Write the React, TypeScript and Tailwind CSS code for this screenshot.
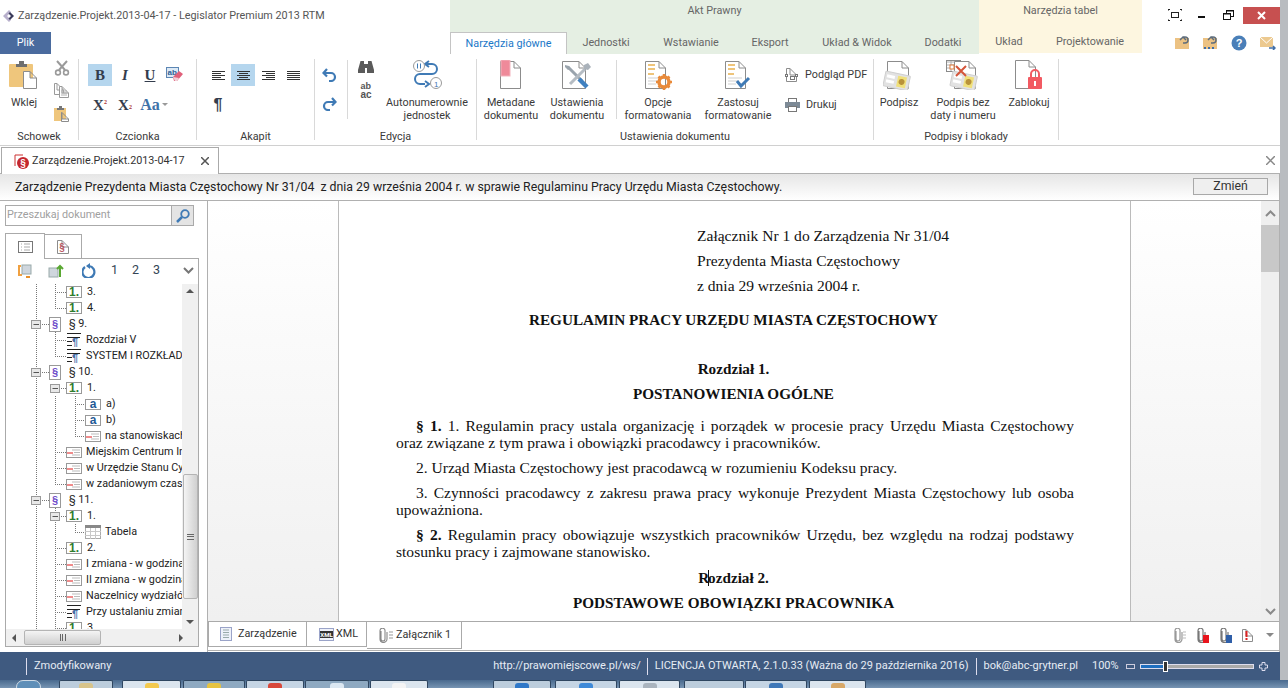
import React from "react";

const G = "#8c8c8c";
const DocShape = ({ x = 0, y = 0, w = 20, h = 28, stroke = G, fill = "#fff" }: any) => (
  <path d={`M${x + 0.5} ${y + 0.5}H${x + w - 7}L${x + w - 0.5} ${y + 7}V${y + h - 0.5}H${x + 0.5}ZM${x + w - 7} ${y + 0.5}V${y + 7}H${x + w - 0.5}`} fill={fill} stroke={stroke} strokeWidth="1" />
);

const Paste = ({ s = 30 }: { s?: number }) => (
  <svg width={s} height={s} viewBox="0 0 30 30">
    <rect x="0" y="4" width="24" height="23" rx="1" fill="#efc67c" />
    <path d="M7 4h3v-3h5v3h3v3H7z" fill="#6f6f6f" />
    <DocShape x={14} y={11} w={14} h={18} />
  </svg>
);
const Scissors = () => (
  <svg width="16" height="16" viewBox="0 0 16 16" fill="none" stroke="#9a9a9a">
    <path d="M3 1l8 9M13 1L5 10" strokeWidth="2" />
    <circle cx="4" cy="12.5" r="2.4" strokeWidth="1.6" />
    <circle cx="12" cy="12.5" r="2.4" strokeWidth="1.6" />
  </svg>
);
const CopyI = () => (
  <svg width="16" height="16" viewBox="0 0 16 16">
    <DocShape x={0} y={0} w={10} h={12} stroke="#9a9a9a" />
    <DocShape x={5} y={3} w={10} h={12} stroke="#9a9a9a" />
    <path d="M7 8h6M7 10h6M7 12h6" stroke="#b0b0b0" />
  </svg>
);
const PasteS = () => (
  <svg width="16" height="16" viewBox="0 0 16 16">
    <rect x="0" y="2" width="12" height="13" fill="#efc67c" />
    <path d="M3 2h2V0h3v2h2v2H3z" fill="#777" />
    <DocShape x={7} y={6} w={8} h={10} />
  </svg>
);
const Eraser = () => (
  <svg width="18" height="16" viewBox="0 0 18 16">
    <rect x="0.5" y="0.5" width="12" height="10" fill="#dce9f5" stroke="#5c86b4" />
    <text x="1.5" y="8" fontSize="8" fill="#2f5f96" fontFamily="Liberation Sans">ab</text>
    <path d="M7 10l6-6 4 3-6 7H8z" fill="#e0607a" />
    <path d="M7 10l2 4h2l2-3z" fill="#f0d0d8" />
  </svg>
);
const Align = ({ k }: { k: "l" | "c" | "r" | "j" }) => (
  <svg width="13" height="9" viewBox="0 0 13 9" stroke="#333">
    {[0, 1, 2, 3, 4].map((i) => {
      const w = k === "j" || i % 2 === 0 ? 13 : 9;
      const x = k === "l" || k === "j" ? 0 : k === "c" ? (13 - w) / 2 : 13 - w;
      return <line key={i} x1={x} x2={x + w} y1={i * 2 + 0.5} y2={i * 2 + 0.5} />;
    })}
  </svg>
);
const Undo = ({ flip }: { flip?: boolean }) => (
  <svg width="15" height="14" viewBox="0 0 15 14" fill="none" stroke="#3f7ab5" strokeWidth="2.2" className={flip ? "-scale-x-100" : ""}>
    <path d="M5 1L1.5 5 5 8.500" />
    <path d="M2 5h7a4 4 0 0 1 0 8H7" />
  </svg>
);
const Binoc = () => (
  <svg width="16" height="14" viewBox="0 0 16 14" fill="#5a5a5a">
    <path d="M2.500 1h3.500v3h1v5H7v4H0v-3z" />
    <path d="M13.500 1H10v3H9v5h0v4h7v-3z" />
    <rect x="6.500" y="4" width="3" height="4" />
  </svg>
);
const AutoNum = () => (
  <svg width="30" height="30" viewBox="0 0 30 30" fill="none">
    <path d="M13 8h7a5 5 0 0 1 0 10H8a5 5 0 0 0 0 10h5" stroke="#3f7ab5" strokeWidth="2" transform="translate(0 -4)" />
    <path d="M17 1l-4 3 4 3M13 21l4 3-4 3" stroke="#3f7ab5" strokeWidth="2" />
    <circle cx="7" cy="6" r="5.500" fill="#fff" stroke="#9a9a9a" />
    <circle cx="24" cy="23" r="5.500" fill="#fff" stroke="#9a9a9a" />
    <path d="M5.500 3.500v5M8.500 3.500v5" stroke="#3f7ab5" />
    <text x="22" y="26.500" fontSize="8" fill="#3f7ab5" fontFamily="Liberation Sans">1</text>
  </svg>
);
const Meta = () => (
  <svg width="22" height="30" viewBox="0 0 22 30">
    <DocShape x={0} y={1} w={21} h={28} />
    <rect x="1" y="0" width="9" height="16" fill="#ef8a9a" stroke="#f3b3bd" />
  </svg>
);
const Tools = () => (
  <svg width="30" height="30" viewBox="0 0 30 30">
    <DocShape x={0} y={1} w={24} h={28} />
    <path d="M6 7l14 14" stroke="#9aa4ad" strokeWidth="3" />
    <path d="M8 24L23 9" stroke="#b5bcc3" strokeWidth="3" />
    <path d="M22 5l4-2 3 4-3 3-4-1z" fill="#aab2ba" />
    <path d="M17 19l8 8" stroke="#3f80c0" strokeWidth="4.500" />
    <path d="M3 5l4 1 1 3-2 1-3-3z" fill="#9aa4ad" />
  </svg>
);
const Lines = ({ check, gear }: { check?: boolean; gear?: boolean }) => (
  <svg width="30" height="30" viewBox="0 0 30 30">
    <DocShape x={2} y={1} w={21} h={28} />
    <path d="M5 5h7M5 9h7M5 14h6" stroke="#eec47a" strokeWidth="2" fill="none" />
    <path d="M5 18h14M5 21h10M5 24h8" stroke="#cfcfcf" fill="none" />
    {gear && (
      <g>
        <circle cx="21" cy="22" r="5" fill="none" stroke="#e98a3a" strokeWidth="3.500" />
        <path d="M21 14v3M21 27v3M13 22h3M26 22h3M15.500 16.500l2 2M24.500 25.500l2 2M26.500 16.500l-2 2M17.500 25.500l-2 2" stroke="#e98a3a" strokeWidth="2.500" />
      </g>
    )}
    {check && <path d="M14 21l4 5 8-8" fill="none" stroke="#3f7ab5" strokeWidth="3" />}
  </svg>
);
const PdfI = () => (
  <svg width="14" height="15" viewBox="0 0 14 15">
    <DocShape x={1} y={0} w={11} h={14} />
    <rect x="0.500" y="6.500" width="2" height="2" fill="#fff" stroke="#777" />
    <rect x="5.500" y="8.500" width="4" height="3" fill="#fff" stroke="#777" />
    <rect x="10.500" y="6.500" width="2" height="2" fill="#fff" stroke="#777" />
  </svg>
);
const Printer = () => (
  <svg width="15" height="14" viewBox="0 0 15 14">
    <rect x="3.500" y="0.500" width="8" height="4" fill="#fff" stroke="#777" />
    <rect x="0" y="4" width="15" height="6" fill="#7d8a96" />
    <rect x="3.500" y="8.500" width="8" height="5" fill="#fff" stroke="#777" />
  </svg>
);
const Card = ({ x, y }: { x: number; y: number }) => (
  <g transform={`translate(${x} ${y}) rotate(12)`}>
    <rect x="0" y="0" width="25" height="15" rx="1" fill="#e2e2e2" stroke="#cfcfcf" />
    <rect x="2" y="3" width="8" height="3" fill="#fff" />
    <rect x="2" y="8" width="8" height="3" fill="#fff" />
    <rect x="13" y="2" width="9" height="11" fill="#f0e07a" />
    <circle cx="17.500" cy="7.500" r="3" fill="#b8923a" />
  </g>
);
const Sign = () => (
  <svg width="32" height="30" viewBox="0 0 32 30">
    <DocShape x={4} y={1} w={22} h={28} />
    <Card x={3} y={11} />
  </svg>
);
const SignX = () => (
  <svg width="34" height="30" viewBox="0 0 34 30">
    <rect x="0.500" y="0.500" width="14" height="11" fill="#fff" stroke="#8a8a8a" />
    <path d="M1 2h13M1 5h13M1 8h13M5 1v10M10 1v10" stroke="#b0b0b0" />
    <DocShape x={8} y={1} w={22} h={28} />
    <Card x={7} y={11} />
    <path d="M10 6l10 10M20 6L10 16" stroke="#d4553a" strokeWidth="2" />
    <rect x="4" y="5" width="4" height="4" fill="#fff" stroke="#e07a3a" />
  </svg>
);
const Lock = () => (
  <svg width="28" height="30" viewBox="0 0 28 30">
    <DocShape x={0} y={0} w={21} h={29} />
    <path d="M16 17v-3a4 4 0 0 1 8 0v3" fill="none" stroke="#f25a62" strokeWidth="2" />
    <rect x="13" y="17" width="14" height="12" rx="1" fill="#f25a62" />
    <rect x="19" y="21" width="2" height="5" fill="#fff" />
  </svg>
);
const Folder = ({ dots }: { dots?: boolean }) => (
  <svg width="15" height="15" viewBox="0 0 15 15">
    <rect x="0" y="3" width="14" height="11" fill="#ecc283" />
    <path d="M5 5L8 2l3 3M8 2h2a3 3 0 0 1 0 6H8" fill="none" stroke="#5f6d7c" strokeWidth="1.500" />
    {dots && <path d="M1 13h2M5 13h2M9 13h2" stroke="#3f6ea8" strokeWidth="2" />}
  </svg>
);
const Help = () => (
  <svg width="16" height="16" viewBox="0 0 16 16">
    <circle cx="8" cy="8" r="7.500" fill="#4a7fb8" />
    <text x="8" y="12" fontSize="11" fontWeight="700" textAnchor="middle" fill="#fff" fontFamily="Liberation Sans">?</text>
  </svg>
);
const Mail = () => (
  <svg width="16" height="14" viewBox="0 0 16 14">
    <rect x="0" y="1" width="13" height="10" fill="#ecc98f" />
    <path d="M0 1l6.500 6L13 1" fill="none" stroke="#fff" />
    <path d="M9 12h6M13 10l2 2-2 2" stroke="#3f6ea8" strokeWidth="1.500" fill="none" />
  </svg>
);

const Big = ({ icon, children, className = "" }: any) => (
  <div className={`flex flex-col items-center shrink-0 ${className}`}>
    <div className="h-[30px] mt-px flex items-start justify-center">{icon}</div>
    <div className="mt-[6px] text-center leading-[13px] whitespace-nowrap">{children}</div>
  </div>
);
const Group = ({ label, className = "", children }: any) => (
  <div className={`h-[81px] border-r border-[#d9d9d9] shrink-0 ${className}`}>
    <div className="h-[71px] flex">{children}</div>
    <div className="h-[14px] leading-[14px] text-center whitespace-nowrap">{label}</div>
  </div>
);
const Tb = ({ on, children, className = "" }: any) => (
  <div className={`w-6 h-[22px] flex items-center justify-center ${on ? "bg-[#b5d6ee]" : ""} ${className}`}>{children}</div>
);

type Row = { t: string; i: string; x: number; v: [number, boolean?][]; exp?: number; h?: number };
const full = (...a: number[]) => a.map((n) => [n] as [number]);
const rows: Row[] = [
  { t: "3.", i: "num", x: 66, v: full(36, 55), h: 55 },
  { t: "4.", i: "num", x: 66, v: [[36], [55, true]], h: 55 },
  { t: "§ 9.", i: "par", x: 49, v: full(36), exp: 36, h: 36 },
  { t: "Rozdział V", i: "rozd", x: 67, v: full(36, 55), h: 55 },
  { t: "SYSTEM I ROZKŁAD CZASU PRACY", i: "rozd", x: 67, v: [[36], [55, true]], h: 55 },
  { t: "§ 10.", i: "par", x: 49, v: full(36), exp: 36, h: 36 },
  { t: "1.", i: "num", x: 66, v: full(36), exp: 55, h: 55 },
  { t: "a)", i: "a", x: 85, v: full(36, 55, 75), h: 75 },
  { t: "b)", i: "a", x: 85, v: full(36, 55, 75), h: 75 },
  { t: "na stanowiskach pracy", i: "line", x: 85, v: [[36], [55], [75, true]], h: 75 },
  { t: "Miejskim Centrum Informacji", i: "line", x: 66, v: full(36, 55), h: 55 },
  { t: "w Urzędzie Stanu Cywilnego", i: "line", x: 66, v: full(36, 55), h: 55 },
  { t: "w zadaniowym czasie pracy", i: "line", x: 66, v: [[36], [55, true]], h: 55 },
  { t: "§ 11.", i: "par", x: 49, v: full(36), exp: 36, h: 36 },
  { t: "1.", i: "num", x: 66, v: full(36, 55), exp: 55, h: 55 },
  { t: "Tabela", i: "table", x: 85, v: [[36], [55], [75, true]], h: 75 },
  { t: "2.", i: "num", x: 66, v: full(36, 55), h: 55 },
  { t: "I zmiana - w godzinach", i: "line", x: 66, v: full(36, 55), h: 55 },
  { t: "II zmiana - w godzinach", i: "line", x: 66, v: full(36, 55), h: 55 },
  { t: "Naczelnicy wydziałów", i: "line", x: 66, v: full(36, 55), h: 55 },
  { t: "Przy ustalaniu zmian", i: "rozd", x: 67, v: full(36, 55), h: 55 },
  { t: "3.", i: "num", x: 66, v: full(36, 55), h: 55 },
];

const TreeIcon = ({ i }: { i: string }) => {
  if (i === "num")
    return (
      <div className="w-[16px] h-[12px] border border-[#999] bg-white flex items-center justify-center text-[12px] leading-none font-bold text-[#2f7d2f] shrink-0 font-['Liberation_Sans',sans-serif]">1.</div>
    );
  if (i === "par")
    return (
      <div className="w-[12px] h-[15px] border border-[#999] bg-white flex items-center justify-center text-[11px] leading-none font-bold text-[#6a48c8] shrink-0 font-['Liberation_Sans',sans-serif]">§</div>
    );
  if (i === "a")
    return (
      <div className="w-[16px] h-[11px] border border-[#999] bg-white flex items-center justify-center text-[12px] leading-none font-bold text-[#1f5a96] shrink-0 font-['Liberation_Sans',sans-serif]">a</div>
    );
  if (i === "line")
    return (
      <svg width="16" height="11" viewBox="0 0 16 11" className="shrink-0">
        <rect x="0.500" y="0.500" width="15" height="10" fill="#fff" stroke="#999" />
        <path d="M6 3h8M8 5.500h6M6 8h8" stroke="#bbb" />
        <path d="M1 6h6" stroke="#e01818" />
      </svg>
    );
  if (i === "rozd")
    return (
      <svg width="14" height="14" viewBox="0 0 14 14" className="shrink-0">
        <path d="M0 .5h14M0 4.500h13M0 8.500h5M0 12.500h5" stroke="#222" />
        <text x="5" y="13" fontSize="11" fontWeight="700" fill="#4a6fa8" fontFamily="Liberation Sans">¶</text>
      </svg>
    );
  return (
    <svg width="16" height="14" viewBox="0 0 16 14" className="shrink-0">
      <rect x="0.500" y="0.500" width="15" height="13" fill="#fff" stroke="#aaa" />
      <rect x="0" y="0" width="16" height="3" fill="#888" />
      <path d="M0 6.500h16M0 10.500h16M5.500 3v11M10.500 3v11" stroke="#c8c8c8" />
    </svg>
  );
};

const TreeRow = ({ r }: { r: Row }) => (
  <div className="flex items-center h-4 whitespace-nowrap text-[#222]">
    <svg width={r.x} height="16" className="shrink-0">
      {r.v.map(([x, half], k) => (
        <line key={k} x1={x + 0.5} x2={x + 0.5} y1="0" y2={half ? 8 : 16} stroke="#777" strokeDasharray="1 1" />
      ))}
      {r.h !== undefined && <line x1={r.h} x2={r.x} y1="8.500" y2="8.500" stroke="#777" strokeDasharray="1 1" />}
      {r.exp !== undefined && (
        <g>
          <rect x={r.exp - 4.5} y="4.500" width="9" height="8" fill="#e8e8e8" stroke="#999" />
          <line x1={r.exp - 2.5} x2={r.exp + 3} y1="8.500" y2="8.500" stroke="#555" />
        </g>
      )}
    </svg>
    <TreeIcon i={r.i} />
    <span className={r.i === "par" ? "ml-2" : r.i === "line" || r.i === "table" ? "ml-[4px]" : "ml-[5px]"}>{r.t}</span>
  </div>
);

const Tri = ({ d, c = "#555" }: { d: "u" | "d" | "l" | "r"; c?: string }) => {
  const p = { u: "M0 5L4 1l4 4z", d: "M0 1l4 4 4-4z", l: "M5 0L1 4l4 4z", r: "M1 0l4 4-4 4z" }[d];
  return (
    <svg width="8" height="8" viewBox="0 0 8 8"><path d={p} fill={c} /></svg>
  );
};
const Chev = ({ up, c = "#777" }: { up?: boolean; c?: string }) => (
  <svg width="11" height="7" viewBox="0 0 11 7" fill="none" stroke={c} strokeWidth="2">
    <path d={up ? "M1 6l4.500-4.500L10 6" : "M1 1l4.500 4.500L10 1"} />
  </svg>
);
const Clip = ({ c = "#999" }: { c?: string }) => (
  <svg width="10" height="15" viewBox="0 0 10 15" fill="none" stroke={c} strokeWidth="1.200">
    <path d="M3 3v8a2 2 0 0 0 4 0V3a2.500 2.500 0 0 0-5-.5V11a3.500 3.500 0 0 0 7 0V4" />
  </svg>
);

const L = ({ className = "", children }: any) => <div className={`h-[17px] leading-[17px] whitespace-nowrap ${className}`}>{children}</div>;
const C = ({ className = "", children }: any) => <div className={`h-[17px] leading-[17px] whitespace-nowrap text-center font-bold text-[15.2px] pr-[3px] ${className}`}>{children}</div>;
const J = ({ className = "", children }: any) => <div className={`h-[17px] leading-[17px] text-justify [text-align-last:justify] overflow-hidden ${className}`}>{children}</div>;

const Task = ({ className = "", ic }: { className?: string; ic?: string }) => (
  <div className={`h-full rounded-t-[2px] shrink-0 border-t border-x border-[#2f4660] flex justify-center overflow-hidden ${className}`}>
    {ic && <div className={`w-[14px] h-[6px] mt-[2px] rounded-t-[3px] ${ic}`} />}
  </div>
);

export default function App() {
  return (
    <div className="w-[1288px] h-[688px] overflow-hidden bg-[#b4b8bc] font-['Roboto',sans-serif] text-[10.8px] text-[#3a3a3a] flex flex-col">
      <div className="flex h-[680px] shrink-0">
        <div className="w-[1280px] bg-white flex flex-col shrink-0">
          {/* top */}
          <div className="flex h-[54px] shrink-0">
            <div className="w-[450px] flex flex-col shrink-0">
              <div className="h-[32px] flex items-center pl-[2px]">
                <svg width="14" height="14" viewBox="0 0 14 14" className="shrink-0">
                  <path d="M7 1L1 7l6 6 2-2-4-4 4-4z" fill="#b8b0cc" />
                  <path d="M8 3l4 4-4 4-1.500-1.500L9 7 6.500 4.500z" fill="#3a3a5a" />
                </svg>
                <span className="ml-[2px] text-[#555] whitespace-nowrap">Zarządzenie.Projekt.2013-04-17 - Legislator Premium 2013 RTM</span>
              </div>
              <div className="w-[51px] h-[22px] bg-[#4a6b9e] text-white flex items-center justify-center">Plik</div>
            </div>
            <div className="w-[529px] bg-[#e5efe3] flex flex-col shrink-0 text-[#666]">
              <div className="h-[32px] pt-[3px] text-center leading-4">Akt Prawny</div>
              <div className="h-[22px] flex items-center whitespace-nowrap text-center">
                <div className="w-[117px] h-[22px] bg-white border-t border-x border-[#c4c4c4] text-[#1a78c8] leading-[22px]">Narzędzia główne</div>
                <div className="w-[78px]">Jednostki</div>
                <div className="w-[92px]">Wstawianie</div>
                <div className="w-[66px]">Eksport</div>
                <div className="w-[108px]">Układ &amp; Widok</div>
                <div className="w-[64px]">Dodatki</div>
              </div>
            </div>
            <div className="w-[163px] bg-[#fdf6e0] flex flex-col shrink-0 text-[#666] h-[53px]">
              <div className="h-[32px] pt-[3px] text-center leading-4">Narzędzia tabel</div>
              <div className="h-[21px] flex items-center whitespace-nowrap text-center">
                <div className="w-[60px]">Układ</div>
                <div className="w-[102px]">Projektowanie</div>
              </div>
            </div>
            <div className="w-[138px] shrink-0 flex flex-col">
              <div className="h-[25px] flex items-start">
                <div className="flex items-center mt-[8px] ml-[26px] h-[14px]">
                  <svg width="14" height="12" viewBox="0 0 14 12" fill="none" stroke="#222"><path d="M0 2V.5h2M12 .5h2V2M14 10v1.500h-2M2 11.500H0V10" /><rect x="3.500" y="3.500" width="7" height="5" /></svg>
                  <div className="w-[7px] h-[2px] bg-[#111] mt-1 ml-[16px]" />
                  <svg width="11" height="10" viewBox="0 0 11 10" fill="none" stroke="#111" className="ml-[18px]"><rect x="3.500" y="0.500" width="7" height="6" strokeWidth="1" /><rect x="0.500" y="3.500" width="7" height="6" fill="#fff" /><path d="M1 4h6M4 1h6" strokeWidth="1" /></svg>
                </div>
                <div className="ml-auto w-[37px] h-[17px] mt-[7px] bg-[#c75050] flex items-center justify-center">
                  <svg width="9" height="9" viewBox="0 0 9 9" stroke="#fff" strokeWidth="2"><path d="M1 1l7 7M8 1L1 8" /></svg>
                </div>
              </div>
              <div className="flex items-center pl-[33px] gap-[13px] h-[26px] pt-[9px]">
                <Folder />
                <Folder dots />
                <Help />
                <Mail />
              </div>
            </div>
          </div>
          {/* ribbon */}
          <div className="h-[92px] border-b border-[#d0d0d0] pt-[5px] flex shrink-0">
            <Group label="Schowek" className="w-[79px]">
              <Big icon={<Paste />} className="w-[40px] ml-[4px]">Wklej</Big>
              <div className="flex flex-col ml-[10px] gap-[7px] pt-px">
                <Scissors />
                <CopyI />
                <PasteS />
              </div>
            </Group>
            <Group label="Czcionka" className="w-[118px]">
              <div className="pl-[9px] pt-[5px] font-['Liberation_Serif',serif] text-[15px] font-bold text-[#333d4d]">
                <div className="flex gap-px">
                  <Tb on>B</Tb>
                  <Tb className="italic">I</Tb>
                  <Tb className="underline">U</Tb>
                  <Tb><Eraser /></Tb>
                </div>
                <div className="flex gap-px mt-2">
                  <Tb>X<sup className="text-[6px] text-[#a33]">2</sup></Tb>
                  <Tb>X<sub className="text-[6px] text-[#a33]">2</sub></Tb>
                  <Tb className="text-[#3f72a8] text-[16px]">Aa</Tb>
                  <div className="h-[22px] flex items-center -ml-px"><svg width="6" height="4" viewBox="0 0 6 4"><path d="M0 0h6L3 3z" fill="#999" /></svg></div>
                </div>
              </div>
            </Group>
            <Group label="Akapit" className="w-[118px]">
              <div className="pl-[9px] pt-[5px]">
                <div className="flex gap-px">
                  <Tb><Align k="l" /></Tb>
                  <Tb on><Align k="c" /></Tb>
                  <Tb><Align k="r" /></Tb>
                  <Tb><Align k="j" /></Tb>
                </div>
                <div className="flex mt-2">
                  <Tb className="text-[16px] font-bold text-[#333d4d] font-['Liberation_Sans',sans-serif]">¶</Tb>
                </div>
              </div>
            </Group>
            <Group label="Edycja" className="w-[162px]">
              <div className="w-[33px] h-[59px] mt-px border-r border-[#d9d9d9] flex flex-col items-center pt-[8px] gap-[15px] pr-[3px]">
                <Undo />
                <Undo flip />
              </div>
              <div className="ml-[10px] w-[16px] flex flex-col items-center pt-px gap-[9px]">
                <Binoc />
                <div className="font-['Liberation_Sans',sans-serif] font-bold text-[9px] text-[#555]">
                  <div className="h-[7px] leading-[7px]">ab</div>
                  <div className="h-[8px] leading-[8px] mt-[1px] text-[10px]">ac</div>
                </div>
              </div>
              <Big icon={<AutoNum />} className="w-[82px] ml-[12px]">Autonumerownie<br />jednostek</Big>
            </Group>
            <Group label="Ustawienia dokumentu" className="w-[397px]">
              <Big icon={<Meta />} className="w-[60px] ml-[4px]">Metadane<br />dokumentu</Big>
              <Big icon={<Tools />} className="w-[60px] ml-[6px]">Ustawienia<br />dokumentu</Big>
              <div className="w-px h-[59px] mt-px bg-[#d9d9d9] ml-[9px]" />
              <Big icon={<Lines gear />} className="w-[76px] ml-[3px]">Opcje<br />formatowania</Big>
              <Big icon={<Lines check />} className="w-[76px] ml-[4px]">Zastosuj<br />formatowanie</Big>
              <div className="ml-[9px] pt-[9px] flex flex-col gap-4">
                <div className="h-[14px] flex items-center gap-[6px] whitespace-nowrap"><PdfI />Podgląd PDF</div>
                <div className="h-[14px] flex items-center gap-[6px] whitespace-nowrap"><Printer />Drukuj</div>
              </div>
            </Group>
            <Group label="Podpisy i blokady" className="w-[185px]">
              <Big icon={<Sign />} className="w-[40px] ml-[5px]">Podpisz</Big>
              <Big icon={<SignX />} className="w-[70px] ml-[9px]">Podpis bez<br />daty i numeru</Big>
              <Big icon={<Lock />} className="w-[44px] ml-[9px]">Zablokuj</Big>
            </Group>
          </div>
          {/* document tab strip */}
          <div className="h-[28px] flex shrink-0 pt-px pl-px border-b border-[#b0b0b0]">
            <div className="w-[218px] h-[27px] bg-white border-t border-x border-[#aaa] flex items-center pl-[12px] text-[#333]">
              <svg width="15" height="15" viewBox="0 0 15 15" className="shrink-0">
                <path d="M1 1h8M1 1v11" stroke="#c33" fill="none" />
                <circle cx="9" cy="9" r="6" fill="#c4272f" />
                <text x="9" y="13" fontSize="10" fontWeight="700" textAnchor="middle" fill="#fff" fontFamily="Liberation Sans">§</text>
              </svg>
              <span className="ml-[3px] whitespace-nowrap">Zarządzenie.Projekt.2013-04-17</span>
              <svg width="8" height="8" viewBox="0 0 8 8" stroke="#555" strokeWidth="1.500" className="ml-auto mr-[9px]"><path d="M0 0l8 8M8 0L0 8" /></svg>
            </div>
            <div className="flex-1 flex items-center justify-end pr-[5px]">
              <svg width="9" height="9" viewBox="0 0 9 9" stroke="#888" strokeWidth="1.500"><path d="M0 0l9 9M9 0L0 9" /></svg>
            </div>
          </div>
          {/* info bar */}
          <div className="h-[27px] flex items-center shrink-0 pl-[15px] pr-[11px] bg-gradient-to-b from-[#e6e6e6] to-white border-b border-r border-[#b0b0b0] text-[#222] text-[12.3px]">
            <span className="whitespace-pre">Zarządzenie Prezydenta Miasta Częstochowy Nr 31/04  z dnia 29 września 2004 r. w sprawie Regulaminu Pracy Urzędu Miasta Częstochowy.</span>
            <div className="ml-auto w-[75px] h-[17px] border border-[#a8a8a8] bg-[#efefef] flex items-center justify-center text-[#333] mb-[2px]">Zmień</div>
          </div>
          {/* content */}
          <div className="h-[451px] flex shrink-0">
            {/* left */}
            <div className="w-[207px] shrink-0 pl-[5px] flex flex-col">
              <div className="w-[189px] h-[21px] mt-[4px] border border-[#aaa] flex bg-white shrink-0">
                <div className="flex-1 pl-px text-[#a0a0a0] leading-[18px]">Przeszukaj dokument</div>
                <div className="w-[22px] bg-[#e4e4e4] border-l border-[#aaa] flex items-center justify-center">
                  <svg width="14" height="14" viewBox="0 0 14 14" fill="none" stroke="#3f7ab5"><circle cx="9" cy="5" r="3.800" strokeWidth="1.800" /><path d="M6 8l-5 5" strokeWidth="2.500" /></svg>
                </div>
              </div>
              <div className="flex mt-[7px] h-[26px] shrink-0 items-end relative z-10 -mb-px">
                <div className="w-[40px] h-[26px] bg-white border-t border-x border-[#aaa] flex items-center justify-center">
                  <svg width="15" height="12" viewBox="0 0 15 12"><rect x="0.500" y="0.500" width="14" height="11" fill="#fff" stroke="#777" /><path d="M3 3h1M6 3h6M3 6h1M6 6h6M3 9h1M6 9h6" stroke="#aaa" /></svg>
                </div>
                <div className="w-[37px] h-[25px] bg-white border-t border-r border-[#aaa] border-b flex items-center justify-center">
                  <svg width="12" height="14" viewBox="0 0 12 14"><DocShape x={0} y={0} w={12} h={14} /><text x="5" y="11" fontSize="10" fontWeight="700" textAnchor="middle" fill="#b8545c" fontFamily="Liberation Sans">§</text></svg>
                </div>
              </div>
              <div className="w-[194px] h-[389px] border border-[#aaa] flex flex-col shrink-0 overflow-hidden">
                <div className="h-[25px] pb-[2px] flex items-center shrink-0 text-[12.500px] text-[#345]">
                  <svg width="16" height="14" viewBox="0 0 16 14" className="ml-[11px]"><rect x="5" y="1" width="9" height="9" fill="#cfd6dd" stroke="#9aa" /><path d="M4 2H2v9h3" fill="none" stroke="#f0a040" strokeWidth="2" /><path d="M9 13h4" stroke="#e8902c" strokeWidth="2" /></svg>
                  <svg width="16" height="14" viewBox="0 0 16 14" className="ml-[15px]"><rect x="1" y="4" width="9" height="9" fill="#cfd6dd" stroke="#9aa" /><path d="M12 13V3M9 5l3-3 3 3" fill="none" stroke="#5aa832" strokeWidth="2" /></svg>
                  <svg width="14" height="15" viewBox="0 0 14 15" fill="none" className="ml-[18px]"><path d="M3 4a6 6 0 1 0 4-1" stroke="#3f7ab5" strokeWidth="2.200" /><path d="M8 0L4 3l4 3z" fill="#3f7ab5" /></svg>
                  <span className="ml-[15px] w-[21px]">1</span>
                  <span className="w-[21px]">2</span>
                  <span className="w-[30px]">3</span>
                  <Chev />
                </div>
                <div className="flex flex-1 min-h-0">
                  <div className="w-[176px] overflow-hidden shrink-0">
                    <div className="-ml-[6px]">
                      {rows.map((r, i) => <TreeRow r={r} key={i} />)}
                    </div>
                  </div>
                  <div className="w-[16px] ml-auto bg-[#f0f0f0] flex flex-col items-center shrink-0">
                    <div className="h-[15px] flex items-center"><Tri d="u" /></div>
                    <div className="h-[175px] shrink-0" />
                    <div className="w-[15px] h-[125px] shrink-0 rounded-[2px] border border-[#b4b4b4] bg-gradient-to-r from-[#f4f4f4] to-[#d0d0d0] flex items-center justify-center">
                      <div className="w-[7px] h-[6px] border-y border-[#666] flex items-center"><div className="w-full h-px bg-[#666]" /></div>
                    </div>
                    <div className="flex-1 flex items-end pb-[2px]"><Tri d="d" /></div>
                  </div>
                </div>
                <div className="h-[17px] bg-[#f0f0f0] flex items-center shrink-0">
                  <div className="w-[18px] flex justify-center"><Tri d="l" /></div>
                  <div className="w-[77px] h-[15px] rounded-[2px] border border-[#b4b4b4] bg-gradient-to-b from-[#f4f4f4] to-[#d0d0d0] flex items-center justify-center">
                    <div className="w-[6px] h-[7px] border-x border-[#666] flex justify-center"><div className="w-px h-full bg-[#666]" /></div>
                  </div>
                  <div className="flex-1 flex justify-end pr-[12px]"><Tri d="r" /></div>
                </div>
              </div>
            </div>
            {/* right */}
            <div className="w-[1073px] shrink-0 flex flex-col border-l border-r border-[#b0b0b0]">
              <div className="h-[421px] flex shrink-0 border-b border-[#aaa] bg-gradient-to-b from-white to-[#f0f0f0]">
                <div className="w-[130px] shrink-0" />
                <div className="w-[793px] shrink-0 h-full bg-white border-x border-[#bbb] pt-[26px] pl-[57px] pr-[56px] font-['Liberation_Serif',serif] text-[15.550px] text-[#111] overflow-hidden">
                  <L className="pl-[301px]">Załącznik Nr 1 do Zarządzenia Nr 31/04</L>
                  <L className="pl-[301px] mt-2">Prezydenta Miasta Częstochowy</L>
                  <L className="pl-[301px] mt-2">z dnia 29 września 2004 r.</L>
                  <C className="mt-[17px]">REGULAMIN PRACY URZĘDU MIASTA CZĘSTOCHOWY</C>
                  <C className="mt-[32px]">Rozdział 1.</C>
                  <C className="mt-2">POSTANOWIENIA OGÓLNE</C>
                  <J className="mt-[15px] pl-5"><b>§ 1.</b> 1. Regulamin pracy ustala organizację i porządek w procesie pracy Urzędu Miasta Częstochowy</J>
                  <L>oraz związane z tym prawa i obowiązki pracodawcy i pracowników.</L>
                  <L className="mt-2 pl-5">2. Urząd Miasta Częstochowy jest pracodawcą w rozumieniu Kodeksu pracy.</L>
                  <J className="mt-2 pl-5">3. Czynności pracodawcy z zakresu prawa pracy wykonuje Prezydent Miasta Częstochowy lub osoba</J>
                  <L>upoważniona.</L>
                  <J className="mt-2 pl-5"><b>§ 2.</b> Regulamin pracy obowiązuje wszystkich pracowników Urzędu, bez względu na rodzaj podstawy</J>
                  <L>stosunku pracy i zajmowane stanowisko.</L>
                  <C className="mt-[9px]">R<span className="inline-block w-px h-[16px] bg-[#111] align-[-3px] -mx-px" />ozdział 2.</C>
                  <C className="mt-2">PODSTAWOWE OBOWIĄZKI PRACOWNIKA</C>
                </div>
                <div className="w-[130px] shrink-0" />
                <div className="w-[18px] bg-[#efefef] flex flex-col items-center shrink-0">
                  <div className="h-[24px] flex items-center"><Chev up c="#8a8a8a" /></div>
                  <div className="w-full h-[47px] bg-[#c8c8c8]" />
                  <div className="flex-1 flex items-end pb-[6px]"><Chev c="#8a8a8a" /></div>
                </div>
              </div>
              <div className="flex-1 flex border-b border-[#b0b0b0] mb-px items-start">
                <div className="w-[99px] h-[25px] border border-t-0 border-[#aaa] flex items-center pl-[11px] gap-[6px] text-[#333] shrink-0">
                  <svg width="12" height="14" viewBox="0 0 12 14"><rect x="0.500" y="0.500" width="11" height="13" fill="#eef1fa" stroke="#9aa3c8" /><path d="M3 3h6M3 5.500h6M3 8h6M3 10.500h6" stroke="#9aa" /></svg>
                  Zarządzenie
                </div>
                <div className="w-[60px] h-[25px] border border-t-0 border-l-0 border-[#aaa] flex items-center pl-[12px] gap-[2px] text-[#333] shrink-0">
                  <div className="w-[15px] h-[13px] border border-[#9aa3c8] bg-[#eef1fa] flex items-center justify-center"><div className="w-[13px] h-[7px] bg-[#333] text-[6px] leading-[7px] text-center text-white font-bold">XML</div></div>
                  XML
                </div>
                <div className="w-[95px] h-[27px] border border-t-0 border-l-0 border-[#aaa] flex items-center pl-[11px] gap-[2px] text-[#333] shrink-0">
                  <svg width="16" height="15" viewBox="0 0 16 15" fill="none" stroke="#888" strokeWidth="1.100"><path d="M3 3v8a2 2 0 0 0 4 0V3a2.500 2.500 0 0 0-5-.5V11a3.500 3.500 0 0 0 7 0V4" /><path d="M11 4h4M11 7h4M11 10h4" stroke="#999" /></svg>
                  Załącznik 1
                </div>
                <div className="ml-auto flex items-center h-[26px] gap-[10px] pr-[5px]">
                  <div className="flex items-center"><Clip /><svg width="3" height="9" viewBox="0 0 3 9"><path d="M0 1h3M0 4h3M0 7h3" stroke="#bbb" /></svg></div>
                  <div className="flex items-end"><Clip c="#777" /><div className="w-[6px] h-[8px] bg-[#e8141c] -ml-[3px]" /></div>
                  <div className="flex items-end"><Clip c="#777" /><div className="w-[6px] h-[8px] bg-[#2f5fa8] -ml-[3px]" /></div>
                  <svg width="11" height="13" viewBox="0 0 11 13"><DocShape x={0} y={0} w={11} h={13} /><rect x="3.500" y="2" width="2" height="6" fill="#d22" /><rect x="3.500" y="9" width="2" height="2" fill="#d22" /></svg>
                  <svg width="8" height="5" viewBox="0 0 8 5" className="ml-[3px]"><path d="M0 0h8L4 4z" fill="#888" /></svg>
                </div>
              </div>
            </div>
          </div>
          {/* status */}
          <div className="h-[28px] bg-[#3f5a80] flex items-center shrink-0 text-[#e6ecf4] whitespace-nowrap text-[11px]">
            <div className="w-px h-[17px] bg-[#dde] ml-[26px]" />
            <span className="ml-[7px]">Zmodyfikowany</span>
            <span className="ml-auto">http://prawomiejscowe.pl/ws/</span>
            <div className="w-px h-[17px] bg-[#dde] ml-[6px]" />
            <span className="ml-[7px]">LICENCJA OTWARTA, 2.1.0.33 (Ważna do 29 października 2016)</span>
            <div className="w-px h-[17px] bg-[#dde] ml-[7px]" />
            <span className="ml-[7px]">bok@abc-grytner.pl</span>
            <span className="ml-[14px] w-[34px]">100%</span>
            <div className="w-[9px] h-[5px] border border-[#ccd] bg-[#3f5a80]" />
            <div className="w-[114px] h-[5px] bg-[#aaa] ml-[5px] flex items-center border border-[#dde]">
              <div className="w-[22px] h-[3px] bg-[#1f6fc0]" />
              <div className="w-[5px] h-[11px] bg-[#333] border border-white shrink-0" />
            </div>
            <svg width="9" height="9" viewBox="0 0 9 9" className="ml-[5px] mr-[12px]" fill="#3f5a80" stroke="#dde"><path d="M3 .5h3v2.500h2.500v3H6v2.500H3V6H.5V3H3z" /></svg>
          </div>
        </div>
        <div className="flex-1 bg-[#b9bcc0]" />
      </div>
      {/* taskbar */}
      <div className="h-[8px] shrink-0 bg-gradient-to-b from-[#4a6a8e] to-[#7795b3] flex">
        <div className="w-[16px] shrink-0" />
        <div className="w-[25px] h-[14px] rounded-full border border-[#cfdbe6] bg-[#5f8fb8] shrink-0" />
        <div className="w-[18px] shrink-0" />
        <Task className="w-[54px] bg-[#bccddc]" ic="bg-[#d8c48a]" />
        <Task className="w-[59px] ml-[9px] bg-[#dbe5ee]" ic="bg-[#f3c94e]" />
        <Task className="w-[62px] ml-[2px] bg-[#8ea9c1]" ic="bg-[#e6c340]" />
        <Task className="w-[58px] ml-px bg-[#c5d5e4]" ic="bg-[#d8483a]" />
        <Task className="w-[64px] ml-px bg-[#8ea9c1]" ic="bg-[#dce8f2]" />
        <Task className="w-[58px] ml-px bg-[#dbe5ee]" ic="bg-[#f4f4f4]" />
        <div className="w-[65px] shrink-0" />
        <Task className="w-[58px] bg-[#bccddc]" ic="bg-[#2f78c8]" />
        <Task className="w-[62px] ml-[4px] bg-[#c5d5e4]" ic="bg-[#3f8ad8]" />
        <Task className="w-[61px] ml-[2px] bg-[#dbe5ee]" ic="bg-[#aab4be]" />
        <Task className="w-[60px] ml-[4px] bg-[#bccddc]" />
        <Task className="w-[62px] ml-px bg-[#c5d5e4]" ic="bg-[#3f78b8]" />
        <Task className="w-[57px] ml-[2px] bg-[#dbe5ee]" ic="bg-[#d8a868]" />
      </div>
    </div>
  );
}
